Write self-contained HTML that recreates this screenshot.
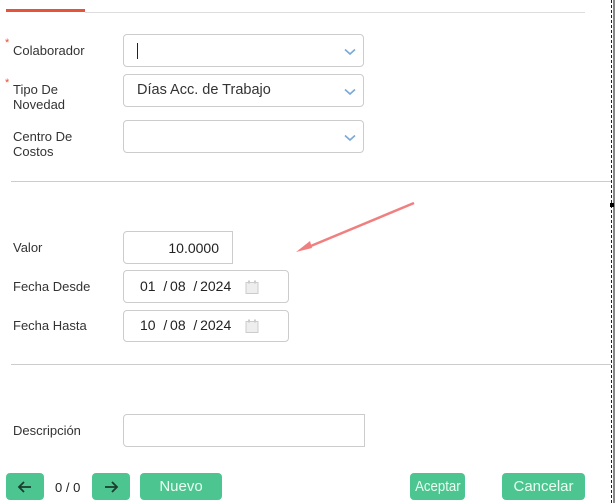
<!DOCTYPE html>
<html><head><meta charset="utf-8"><style>
*{box-sizing:border-box;margin:0;padding:0}
body{width:615px;height:503px;background:#fff;position:relative;overflow:hidden;font-family:"Liberation Sans",sans-serif;color:#333;font-size:13px}
.a{position:absolute}
.lbl{position:absolute;left:13px;font-size:13px;line-height:15px;color:#333}
.star{position:absolute;left:5px;color:#e74c3c;font-size:11px}
.box{position:absolute;border:1px solid #ccc;border-radius:4px;background:#fff}
.chev{position:absolute;right:7px;top:13px}
.btn{position:absolute;background:#4dc591;border-radius:4px;color:#e8fff2;font-size:15px;text-align:center;line-height:27px;height:27px;top:473px}
.hr{position:absolute;left:11px;width:600px;height:1px;background:#ccc}
.date{font-size:14px;color:#222}
</style></head><body>
<div class="a" style="left:6px;top:9px;width:79px;height:3px;background:#e5533d"></div>
<div class="a" style="left:85px;top:12px;width:500px;height:1px;background:#ddd"></div>

<span class="star" style="top:37px">*</span>
<div class="lbl" style="top:43px">Colaborador</div>
<div class="box" style="left:123px;top:34px;width:241px;height:33px">
<div class="a" style="left:13px;top:8px;width:1px;height:16px;background:#222"></div>
<svg class="chev" width="12" height="8" viewBox="0 0 12 8"><path d="M1 1.5l5 4.5 5-4.5" fill="none" stroke="#7aa8d8" stroke-width="1.6"/></svg></div>

<span class="star" style="top:77px">*</span>
<div class="lbl" style="top:82px">Tipo De<br>Novedad</div>
<div class="box" style="left:123px;top:74px;width:241px;height:33px">
<span class="a" style="left:13px;top:7px;font-size:14.5px;color:#333">Días Acc. de Trabajo</span>
<svg class="chev" width="12" height="8" viewBox="0 0 12 8"><path d="M1 1.5l5 4.5 5-4.5" fill="none" stroke="#7aa8d8" stroke-width="1.6"/></svg></div>

<div class="lbl" style="top:129px">Centro De<br>Costos</div>
<div class="box" style="left:123px;top:120px;width:241px;height:33px">
<svg class="chev" width="12" height="8" viewBox="0 0 12 8"><path d="M1 1.5l5 4.5 5-4.5" fill="none" stroke="#7aa8d8" stroke-width="1.6"/></svg></div>

<div class="hr" style="top:181px"></div>

<svg class="a" style="left:290px;top:198px" width="130" height="60" viewBox="0 0 130 60"><path d="M124 5L16 50" stroke="#f08080" stroke-width="2.5"/><path d="M6 54l14-11 2 7z" fill="#f08080"/></svg>

<div class="lbl" style="top:240px">Valor</div>
<div class="box" style="left:123px;top:231px;width:110px;height:33px;border-radius:4px 0 0 4px">
<span class="a" style="right:13px;top:8px;font-size:14px;color:#222">10.0000</span></div>

<div class="lbl" style="top:279px">Fecha Desde</div>
<div class="box" style="left:123px;top:270px;width:166px;height:33px">
<span class="a date" style="left:16px;top:7px">01&nbsp; /&thinsp;08&nbsp; /&thinsp;2024</span>
<svg class="a" style="left:121px;top:9px" width="15" height="15" viewBox="0 0 15 15"><rect x="1" y="2.5" width="12" height="11" fill="#eee" stroke="#ccc"/><rect x="3" y="0.5" width="2" height="3" fill="#ccc"/><rect x="9" y="0.5" width="2" height="3" fill="#ccc"/></svg></div>

<div class="lbl" style="top:318px">Fecha Hasta</div>
<div class="box" style="left:123px;top:310px;width:166px;height:32px">
<span class="a date" style="left:16px;top:6px">10&nbsp; /&thinsp;08&nbsp; /&thinsp;2024</span>
<svg class="a" style="left:121px;top:8px" width="15" height="15" viewBox="0 0 15 15"><rect x="1" y="2.5" width="12" height="11" fill="#eee" stroke="#ccc"/><rect x="3" y="0.5" width="2" height="3" fill="#ccc"/><rect x="9" y="0.5" width="2" height="3" fill="#ccc"/></svg></div>

<div class="hr" style="top:364px"></div>

<div class="lbl" style="top:423px">Descripción</div>
<div class="box" style="left:123px;top:414px;width:242px;height:33px;border-radius:4px 0 0 4px"></div>

<div class="btn" style="left:6px;width:38px"><svg width="16" height="14" viewBox="0 0 16 14" style="margin-top:7px"><path d="M14 7H2M7 2L2 7l5 5" fill="none" stroke="#1d3b2e" stroke-width="1.8"/></svg></div>
<div class="a" style="left:55px;top:480px;font-size:13px;color:#222">0 / 0</div>
<div class="btn" style="left:92px;width:38px"><svg width="16" height="14" viewBox="0 0 16 14" style="margin-top:7px"><path d="M2 7h12M9 2l5 5-5 5" fill="none" stroke="#1d3b2e" stroke-width="1.8"/></svg></div>
<div class="btn" style="left:140px;width:82px">Nuevo</div>
<div class="btn" style="left:410px;width:55px"><span style="display:inline-block;transform:scaleX(0.88)">Aceptar</span></div>
<div class="btn" style="left:502px;width:83px">Cancelar</div>

<div class="a" style="left:611px;top:0;width:0;height:503px;border-left:1px dashed #222"></div>
<div class="a" style="left:613px;top:0;width:2px;height:503px;background:#888"></div>
<div class="a" style="left:610px;top:203px;width:4px;height:4px;background:#000"></div>
</body></html>
